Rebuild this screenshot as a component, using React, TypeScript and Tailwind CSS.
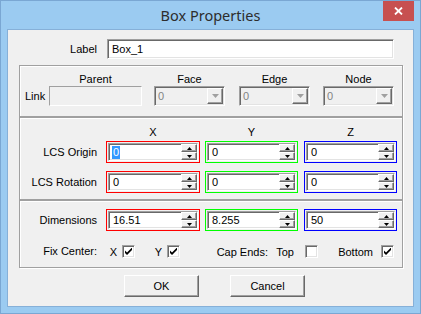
import React from "react";

const sunken =
  "border border-t-[#a0a0a0] border-l-[#a0a0a0] border-b-white border-r-white shadow-[inset_1px_1px_0_#696969,inset_-1px_-1px_0_#e3e3e3]";
const raised =
  "border border-t-white border-l-white border-b-[#696969] border-r-[#696969] shadow-[inset_-1px_-1px_0_#a0a0a0]";

function SpinArrow({ up }: { up?: boolean }) {
  return (
    <svg width="5" height="3" viewBox="0 0 5 3">
      {up ? <path d="M2.5 0 L5 3 L0 3 Z" fill="#000" /> : <path d="M0 0 L5 0 L2.5 3 Z" fill="#000" />}
    </svg>
  );
}

function Spin({ value, className, selected }: { value: string; className: string; selected?: boolean }) {
  return (
    <div className={`h-[22px] border p-[1px] ${className}`}>
      <div className={`h-full flex bg-white ${sunken}`}>
        <div className="flex-1 flex items-center pl-[3px] text-black">
          {selected ? (
            <span className="bg-[#3399ff] text-white leading-[13px] px-[1px]">{value}</span>
          ) : (
            <span className="pl-[1px]">{value}</span>
          )}
        </div>
        <div className="w-[16px] flex flex-col">
          <div className={`h-[8px] flex items-center justify-center bg-[#f0f0f0] ${raised}`}>
            <SpinArrow up />
          </div>
          <div className={`h-[8px] flex items-center justify-center bg-[#f0f0f0] ${raised}`}>
            <SpinArrow />
          </div>
        </div>
      </div>
    </div>
  );
}

function Combo() {
  return (
    <div className={`w-[71px] h-[20px] flex p-[1px] bg-[#f0f0f0] ${sunken}`}>
      <div className="flex-1 flex items-center pl-[2px] text-[#838383]">0</div>
      <div className={`w-[16px] flex items-center justify-center bg-[#f0f0f0] ${raised}`}>
        <svg width="7" height="4" viewBox="0 0 7 4">
          <path d="M0 0 L7 0 L3.5 4 Z" fill="#a0a0a0" />
        </svg>
      </div>
    </div>
  );
}

function Check({ checked }: { checked?: boolean }) {
  return (
    <div className={`w-[13px] h-[13px] flex items-center justify-center bg-white ${sunken}`}>
      {checked && (
        <svg width="7" height="7" viewBox="0 0 7 7">
          <path d="M0 2 L2 4 L7 -1 L7 1.5 L2 6.5 L0 4.5 Z" fill="#000" transform="translate(0 0.5)" />
        </svg>
      )}
    </div>
  );
}

function Group({ className, children }: { className: string; children: React.ReactNode }) {
  return (
    <div
      className={`ml-[11px] w-[384px] border border-[#a0a0a0] shadow-[inset_1px_1px_0_#fff,1px_1px_0_#fff] flex flex-col ${className}`}
    >
      {children}
    </div>
  );
}

export default function App() {
  return (
    <div className="w-[421px] h-[314px] bg-[#9bcbf1] border border-[#7aa7d3] flex flex-col font-['Liberation_Sans',Arial,sans-serif] text-[11px] text-black">
      <div className="h-[28px] grid grid-cols-[1fr_auto_1fr]">
        <div />
        <div className="self-center pt-[1px] font-['Noto_Sans',sans-serif] text-[14.5px] text-[#2d2d2d] leading-none">
          Box Properties
        </div>
        <div className="flex justify-end items-start">
          <div className="mr-[6px] w-[31px] h-[20px] bg-[#c75050] flex items-center justify-center">
            <svg width="9" height="8" viewBox="0 0 9 8">
              <path d="M1 0.5 L8 7.5 M8 0.5 L1 7.5" stroke="#fff" strokeWidth="1.8" />
            </svg>
          </div>
        </div>
      </div>

      <div className="mx-[6px] mb-[6px] flex-1 bg-[#f0f0f0] border border-[#86b0d8] flex flex-col">
        <div className="mt-[9px] h-[20px] flex items-center">
          <div className="w-[89px] text-right">Label</div>
          <div className={`ml-[10px] w-[287px] h-[20px] bg-white flex items-center pl-[4px] ${sunken}`}>Box_1</div>
        </div>

        <Group className="mt-[6px] h-[52px]">
          <div className="mt-[6px] h-[14px] flex items-center">
            <div className="w-[29px]" />
            <div className="w-[93px] text-center">Parent</div>
            <div className="ml-[12px] w-[71px] text-center">Face</div>
            <div className="ml-[14px] w-[71px] text-center">Edge</div>
            <div className="ml-[13px] w-[71px] text-center">Node</div>
          </div>
          <div className="h-[20px] flex items-center">
            <div className="w-[29px] pl-[5px]">Link</div>
            <div className="w-[93px] h-[20px] border border-t-[#a0a0a0] border-l-[#a0a0a0] border-b-white border-r-white bg-[#f0f0f0]" />
            <div className="ml-[12px]">
              <Combo />
            </div>
            <div className="ml-[14px]">
              <Combo />
            </div>
            <div className="ml-[13px]">
              <Combo />
            </div>
          </div>
        </Group>

        <Group className="h-[83px]">
          <div className="mt-[7px] h-[14px] flex items-center">
            <div className="w-[86px]" />
            <div className="w-[94px] text-center">X</div>
            <div className="ml-[5px] w-[93px] text-center">Y</div>
            <div className="ml-[6px] w-[93px] text-center">Z</div>
          </div>
          <div className="mt-[2px] flex items-center">
            <div className="w-[77px] text-right">LCS Origin</div>
            <Spin value="0" selected className="ml-[9px] w-[94px] border-[#ff0000]" />
            <Spin value="0" className="ml-[5px] w-[93px] border-[#00ff00]" />
            <Spin value="0" className="ml-[6px] w-[93px] border-[#0000ff]" />
          </div>
          <div className="mt-[8px] flex items-center">
            <div className="w-[77px] text-right">LCS Rotation</div>
            <Spin value="0" className="ml-[9px] w-[94px] border-[#ff0000]" />
            <Spin value="0" className="ml-[5px] w-[93px] border-[#00ff00]" />
            <Spin value="0" className="ml-[6px] w-[93px] border-[#0000ff]" />
          </div>
        </Group>

        <Group className="h-[68px]">
          <div className="mt-[8px] flex items-center">
            <div className="w-[77px] text-right">Dimensions</div>
            <Spin value="16.51" className="ml-[9px] w-[94px] border-[#ff0000]" />
            <Spin value="8.255" className="ml-[5px] w-[93px] border-[#00ff00]" />
            <Spin value="50" className="ml-[6px] w-[93px] border-[#0000ff]" />
          </div>
          <div className="mt-[14px] h-[13px] flex items-center">
            <div className="w-[77px] text-right">Fix Center:</div>
            <div className="w-[25px] text-right pr-[5px] pt-[2px]">X</div>
            <Check checked />
            <div className="w-[32px] text-right pr-[5px] pt-[2px]">Y</div>
            <Check checked />
            <div className="w-[88px] text-right pt-[1px]">Cap Ends:</div>
            <div className="w-[37px] text-right pr-[11px] pt-[1px]">Top</div>
            <Check />
            <div className="w-[63px] text-right pr-[8px] pt-[1px]">Bottom</div>
            <Check checked />
          </div>
        </Group>

        <div className="mt-[7px] flex">
          <button className={`ml-[116px] w-[75px] h-[22px] bg-[#f0f0f0] ${raised}`}>OK</button>
          <button className={`ml-[31px] w-[75px] h-[22px] bg-[#f0f0f0] ${raised}`}>Cancel</button>
        </div>
      </div>
    </div>
  );
}
